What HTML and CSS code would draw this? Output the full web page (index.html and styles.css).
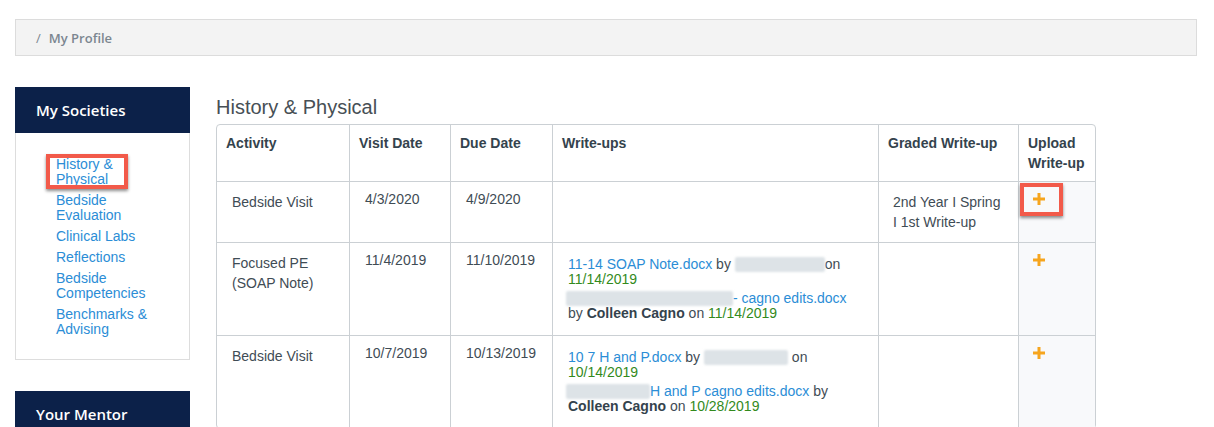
FILE: index.html
```html
<!DOCTYPE html>
<html lang="en">
<head>
<meta charset="utf-8">
<title>My Profile</title>
<link rel="stylesheet" href="styles.css">
</head>
<body>
<div class="page">
  <nav class="breadcrumb"><span class="sep">/</span><span class="crumb">My Profile</span></nav>
  <div class="layout">
    <aside class="sidebar">
      <section class="panel">
        <h3 class="panel-title">My Societies</h3>
        <ul class="panel-list">
          <li class="marked"><a href="#">History &amp; Physical</a><span class="callout callout-nav"></span></li>
          <li><a href="#">Bedside Evaluation</a></li>
          <li><a href="#">Clinical Labs</a></li>
          <li><a href="#">Reflections</a></li>
          <li><a href="#">Bedside Competencies</a></li>
          <li><a href="#">Benchmarks &amp; Advising</a></li>
        </ul>
      </section>
      <section class="panel panel-mentor">
        <h3 class="panel-title">Your Mentor</h3>
      </section>
    </aside>
    <main class="main">
      <h2 class="title">History &amp; Physical</h2>
      <table class="grid">
        <thead>
          <tr>
            <th class="c-act">Activity</th>
            <th class="c-visit">Visit Date</th>
            <th class="c-due">Due Date</th>
            <th class="c-writeups">Write-ups</th>
            <th class="c-graded">Graded Write-up</th>
            <th class="c-upload">Upload Write-up</th>
          </tr>
        </thead>
        <tbody>
          <tr>
            <td>Bedside Visit</td>
            <td class="date">4/3/2020</td>
            <td class="date">4/9/2020</td>
            <td class="writeups"></td>
            <td class="graded">2nd Year I Spring I 1st Write-up</td>
            <td class="upload"><span class="plus-wrap"><svg class="plus" width="12" height="12" viewBox="0 0 12 12"><rect x="0" y="4.5" width="12" height="3" fill="#f6a51e"/><rect x="4.5" y="0" width="3" height="12" fill="#f6a51e"/></svg><span class="callout callout-plus"></span></span></td>
          </tr>
          <tr>
            <td>Focused PE (SOAP Note)</td>
            <td class="date">11/4/2019</td>
            <td class="date">11/10/2019</td>
            <td class="writeups">
              <p class="entry"><a href="#">11-14 SOAP Note.docx</a> by <span class="redact w90"></span>on <span class="when">11/14/2019</span></p>
              <p class="entry"><a href="#"><span class="redact w167 lead"></span>- cagno edits.docx</a> by <b>Colleen Cagno</b> on <span class="when">11/14/2019</span></p>
            </td>
            <td class="graded"></td>
            <td class="upload"><svg class="plus" width="12" height="12" viewBox="0 0 12 12"><rect x="0" y="4.5" width="12" height="3" fill="#f6a51e"/><rect x="4.5" y="0" width="3" height="12" fill="#f6a51e"/></svg></td>
          </tr>
          <tr>
            <td>Bedside Visit</td>
            <td class="date">10/7/2019</td>
            <td class="date">10/13/2019</td>
            <td class="writeups">
              <p class="entry"><a href="#">10 7 H and P.docx</a> by <span class="redact w84"></span> on <span class="when">10/14/2019</span></p>
              <p class="entry"><a href="#"><span class="redact w84 lead"></span>H and P cagno edits.docx</a> by <b>Colleen Cagno</b> on <span class="when">10/28/2019</span></p>
            </td>
            <td class="graded"></td>
            <td class="upload"><svg class="plus" width="12" height="12" viewBox="0 0 12 12"><rect x="0" y="4.5" width="12" height="3" fill="#f6a51e"/><rect x="4.5" y="0" width="3" height="12" fill="#f6a51e"/></svg></td>
          </tr>
        </tbody>
      </table>
    </main>
  </div>
</div>
</body>
</html>
```

FILE: styles.css
```css
* { box-sizing: border-box; }

html, body {
  margin: 0;
  padding: 0;
  background: #ffffff;
}

body {
  font-family: "Liberation Sans", Arial, sans-serif;
  font-size: 14px;
  color: #3f4c55;
}

a {
  color: #2b8dd6;
  text-decoration: none;
}

.page {
  padding: 19px 17px 0 15px;
}

.breadcrumb {
  display: flex;
  align-items: center;
  height: 37px;
  padding: 0 20px;
  background: #f3f3f3;
  border: 1px solid #dcdcdc;
  font-family: "Open Sans", "Liberation Sans", sans-serif;
  font-weight: 600;
  font-size: 13px;
  color: #7b8690;
}

.breadcrumb .sep {
  margin-right: 8px;
  font-weight: 400;
}

.layout {
  display: grid;
  grid-template-columns: 175px 880px;
  column-gap: 26px;
  align-items: start;
  margin-top: 31px;
}

.sidebar {
  display: flex;
  flex-direction: column;
  gap: 31px;
}

.panel-title {
  margin: 0;
  height: 46px;
  display: flex;
  align-items: center;
  padding-left: 21px;
  background: #0c2149;
  color: #ffffff;
  font-family: "Open Sans", "Liberation Sans", sans-serif;
  font-weight: 600;
  font-size: 15px;
}

.panel-list {
  list-style: none;
  margin: 0;
  padding: 24px 28px 22px 40px;
  border: 1px solid #dddddd;
  border-top: none;
  line-height: 15px;
  font-size: 14px;
}

.panel-list li + li {
  margin-top: 6px;
}

.panel-list li {
  position: relative;
}

.callout {
  position: absolute;
  border: 4px solid #f25a4a;
  box-shadow: 0 2px 3px rgba(0, 0, 0, 0.45);
  pointer-events: none;
}

.callout-nav {
  left: -10px;
  top: -3px;
  width: 82px;
  height: 35px;
}

.main {
  min-width: 0;
}

.title {
  margin: 8px 0 5px;
  font-size: 20px;
  line-height: 24px;
  font-weight: 400;
  color: #474f55;
}

.grid {
  width: 880px;
  table-layout: fixed;
  border-collapse: separate;
  border-spacing: 0;
  border: 1px solid #cbd0d4;
  border-radius: 4px;
}

.grid th {
  text-align: left;
  vertical-align: top;
  padding: 8px 9px;
  line-height: 20px;
  font-weight: 700;
  color: #34434d;
}

.grid th + th,
.grid td + td {
  border-left: 1px solid #cbd0d4;
}

.grid td {
  border-top: 1px solid #cbd0d4;
  vertical-align: top;
  padding: 10px 15px;
  line-height: 20px;
}

.c-act { width: 132px; }
.c-visit { width: 101px; }
.c-due { width: 102px; }
.c-writeups { width: 326px; }
.c-graded { width: 140px; }
.c-upload { width: 77px; }

.grid td.date {
  padding-top: 7px;
}

.grid td.writeups {
  line-height: 15px;
  padding-right: 18px;
}

.entry {
  margin: 4px 0;
}

.entry b {
  color: #34434d;
}

.when {
  color: #338a1c;
}

.redact {
  display: inline-block;
  height: 15px;
  vertical-align: -3px;
  background: #dde3e7;
  border-radius: 2px;
  filter: blur(1px);
}

.redact.lead {
  margin-left: -2px;
}

.w90 { width: 90px; }
.w167 { width: 167px; }
.w84 { width: 84px; }

.grid td.graded {
  padding-left: 14px;
  padding-right: 15px;
}

.grid td.upload {
  background: #f8f9fb;
  padding: 11px 14px;
  line-height: 12px;
}

.plus {
  display: block;
}

.plus-wrap {
  position: relative;
  display: block;
  width: 12px;
  height: 12px;
}

.callout-plus {
  left: -13px;
  top: -10px;
  width: 43px;
  height: 33px;
}
```
